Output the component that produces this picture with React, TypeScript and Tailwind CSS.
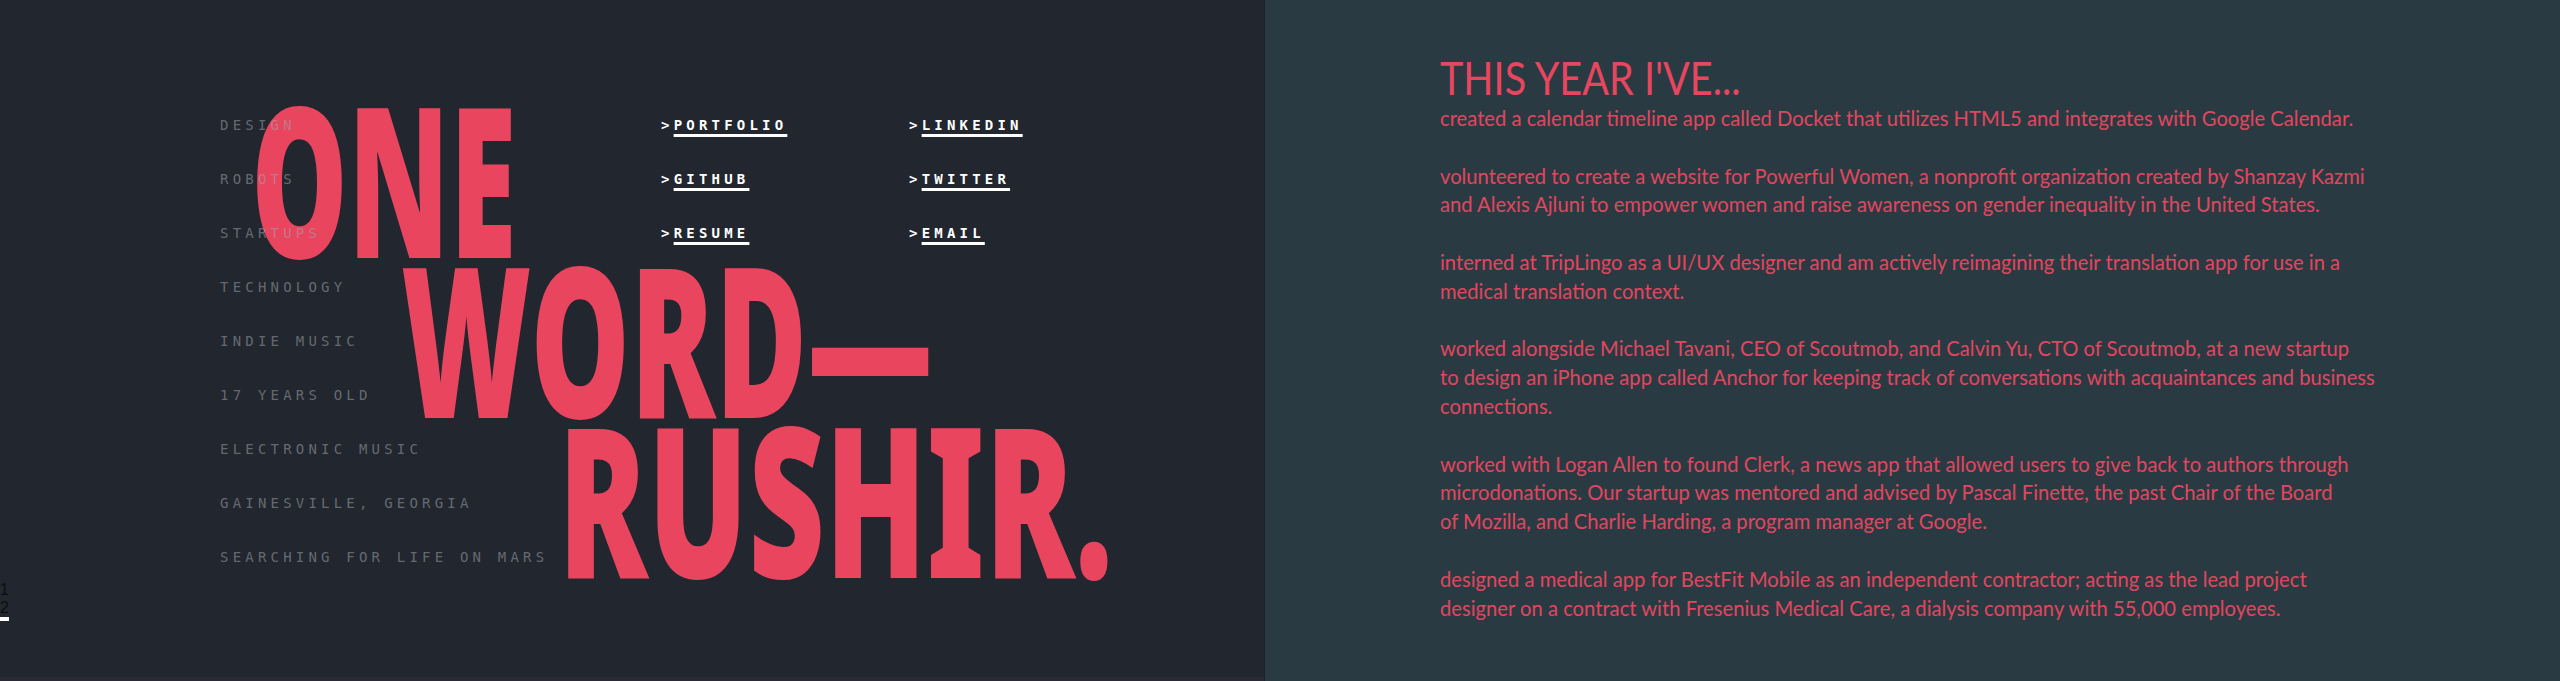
const tags = [
  "Design",
  "Robots",
  "Startups",
  "Technology",
  "Indie Music",
  "17 Years Old",
  "Electronic Music",
  "Gainesville, Georgia",
  "Searching for Life on Mars",
];

const links = ["Portfolio", "LinkedIn", "GitHub", "Twitter", "Resume", "Email"];

// line breaks kept as they fall in the original layout
const paragraphs: string[][] = [
  ["created a calendar timeline app called Docket that utilizes HTML5 and integrates with Google Calendar."],
  [
    "volunteered to create a website for Powerful Women, a nonprofit organization created by Shanzay Kazmi",
    "and Alexis Ajluni to empower women and raise awareness on gender inequality in the United States.",
  ],
  [
    "interned at TripLingo as a UI/UX designer and am actively reimagining their translation app for use in a",
    "medical translation context.",
  ],
  [
    "worked alongside Michael Tavani, CEO of Scoutmob, and Calvin Yu, CTO of Scoutmob, at a new startup",
    "to design an iPhone app called Anchor for keeping track of conversations with acquaintances and business",
    "connections.",
  ],
  [
    "worked with Logan Allen to found Clerk, a news app that allowed users to give back to authors through",
    "microdonations. Our startup was mentored and advised by Pascal Finette, the past Chair of the Board",
    "of Mozilla, and Charlie Harding, a program manager at Google.",
  ],
  [
    "designed a medical app for BestFit Mobile as an independent contractor; acting as the lead project",
    "designer on a contract with Fresenius Medical Care, a dialysis company with 55,000 employees.",
  ],
];

export default function App() {
  return (
    <div className="flex h-screen w-full overflow-hidden">
      {/* Left: intro */}
      <section className="relative grid h-full w-[1265px] shrink-0 border-r border-[#1d2128] bg-[#22272f]">
        {/* headline shares the grid cell with the lists and sits under them.
            no condensed face installed, so squeeze each line horizontally */}
        <h1 className="z-0 pt-[97px] font-['Noto_Sans',sans-serif] text-[210px] font-black uppercase leading-[160px] text-[#e9455f] [grid-area:1/1]">
          <span className="ml-[251px] block w-fit origin-left scale-x-[0.58]">One</span>
          <span className="ml-[401px] block w-fit origin-left scale-x-[0.598]">Word—</span>
          <span className="ml-[558px] block w-fit origin-left scale-x-[0.632]">Rushir.</span>
        </h1>

        <div className="z-10 flex items-start pl-[220px] pt-[98px] font-['DejaVu_Sans_Mono',monospace] text-[14px] uppercase tracking-[4.2px] [grid-area:1/1]">
          <ul className="w-[441px]">
            {tags.map((t) => (
              <li key={t} className="h-[54px] leading-[54px] text-[rgba(160,164,171,0.55)]">
                {t}
              </li>
            ))}
          </ul>
          <ul className="grid grid-cols-[248px_auto] font-bold text-white">
            {links.map((l) => (
              <li key={l} className="h-[54px] leading-[54px]">
                &gt;
                <a href="#" className="underline decoration-[3px] underline-offset-[4px]">
                  {l}
                </a>
              </li>
            ))}
          </ul>
        </div>

        {/* slide counter */}
        <div className="absolute left-0 top-[581px] font-['Liberation_Sans',sans-serif] text-[16px] leading-[18px] text-[#0c0d10]">
          <div>1</div>
          <div className="w-[9px] border-b-[4px] border-white">2</div>
        </div>

        <div className="absolute inset-x-0 bottom-0 h-[4px] bg-[#2a2936]" />
      </section>

      {/* Right: this year */}
      <section className="h-full flex-1 bg-[#2a3a42] pl-[175px] pt-[55px] font-['Lato',sans-serif] text-[#e0475f]">
        <h2 className="w-fit origin-left scale-x-[0.86] text-[46px] font-normal leading-[46px] text-[#e8455f]">
          THIS YEAR I'VE...
        </h2>
        <div className="mt-[3px] text-[20.2px] leading-[28.8px]">
          {paragraphs.map((p, i) => (
            <p key={i} className="mb-[28.8px] whitespace-nowrap">
              {p.map((line, j) => (
                <span key={j} className="block">
                  {line}
                </span>
              ))}
            </p>
          ))}
        </div>
      </section>
    </div>
  );
}
